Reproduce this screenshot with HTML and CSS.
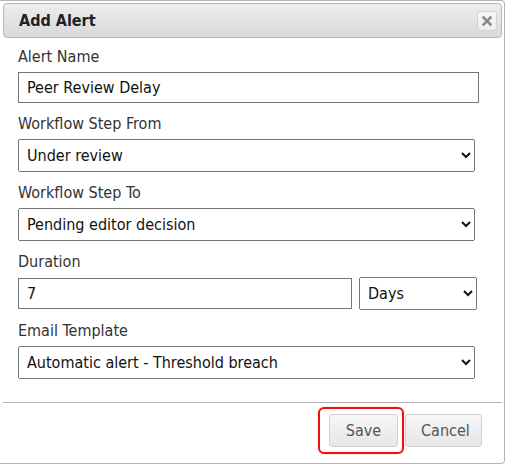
FILE: index.html
```html
<!DOCTYPE html>
<html lang="en">
<head>
<meta charset="utf-8">
<title>Add Alert</title>
<link rel="stylesheet" href="styles.css">
</head>
<body>
<div class="dialog">
  <div class="titlebar">
    <span class="title">Add Alert</span>
    <button class="close" type="button" aria-label="Close">
      <svg width="10" height="10" viewBox="0 0 10 10"><path d="M1.5 1.5 L8.5 8.5 M8.5 1.5 L1.5 8.5" stroke="#8a8a8a" stroke-width="2.6" stroke-linecap="square"/></svg>
    </button>
  </div>
  <div class="content">
    <div class="field">
      <label class="label">Alert Name</label>
      <input class="text full" type="text" value="Peer Review Delay">
    </div>
    <div class="field">
      <label class="label">Workflow Step From</label>
      <select class="sel wide"><option>Under review</option></select>
    </div>
    <div class="field">
      <label class="label">Workflow Step To</label>
      <select class="sel wide"><option>Pending editor decision</option></select>
    </div>
    <div class="field">
      <label class="label">Duration</label>
      <div class="duration-row">
        <input class="text dur" type="text" value="7">
        <select class="sel days"><option>Days</option></select>
      </div>
    </div>
    <div class="field">
      <label class="label">Email Template</label>
      <select class="sel wide"><option>Automatic alert - Threshold breach</option></select>
    </div>
  </div>
  <div class="buttonpane">
    <span class="focus-ring"><button class="btn save" type="button">Save</button></span>
    <button class="btn cancel" type="button">Cancel</button>
  </div>
</div>
</body>
</html>
```
FILE: styles.css
```css
html, body {
  margin: 0;
  padding: 0;
  background: #ffffff;
}
body {
  font-family: "DejaVu Sans Condensed", "DejaVu Sans", sans-serif;
  font-stretch: semi-condensed;
  font-size: 16px;
  color: #333333;
}
.dialog {
  box-sizing: border-box;
  width: 505px;
  height: 464px;
  border: 1px solid #b4b4b4;
  border-left: none;
  border-radius: 0 4px 4px 0;
  padding: 2px 2px 0 3px;
  display: flex;
  flex-direction: column;
}
.titlebar {
  box-sizing: border-box;
  height: 35px;
  border: 1px solid #b8b8b8;
  border-radius: 4px;
  background: linear-gradient(#ededed, #d9d9d9);
  display: flex;
  align-items: center;
  justify-content: space-between;
  padding: 0 4px 0 15px;
}
.title {
  font-weight: bold;
  color: #222222;
  font-size: 16px;
}
.close {
  box-sizing: border-box;
  width: 20px;
  height: 20px;
  margin-top: 1px;
  padding: 0;
  border: 1px solid #d3d3d3;
  border-radius: 3px;
  background: linear-gradient(#f8f8f8, #ececec);
  display: flex;
  align-items: center;
  justify-content: center;
}
.content {
  padding: 9px 0 0 15px;
}
.field {
  margin-bottom: 11px;
}
.label {
  display: block;
  line-height: 19px;
  margin-bottom: 6px;
  color: #333333;
}
.text {
  box-sizing: border-box;
  height: 31px;
  border: 1px solid #767676;
  border-radius: 0;
  padding: 0 8px;
  font: inherit;
  color: #111111;
  background: #ffffff;
  margin: 0;
}
.full {
  width: 461px;
}
.sel {
  box-sizing: border-box;
  height: 33px;
  font: inherit;
  color: #111111;
  margin: 0;
  padding-left: 4px;
}
.wide {
  width: 457px;
}
.duration-row {
  display: flex;
  align-items: center;
  gap: 7px;
}
.dur {
  width: 334px;
}
.days {
  width: 118px;
}
.buttonpane {
  margin-top: auto;
  border-top: 1px solid #b4b4b4;
  padding: 4px 20px 9px 0;
  display: flex;
  justify-content: flex-end;
  align-items: center;
  gap: 1px;
}
.focus-ring {
  display: flex;
  border: 2px solid #f01010;
  border-radius: 6px;
  padding: 5px 4px 5px 9px;
  box-shadow: 0 0 1px rgba(255, 0, 0, 0.6);
}
.btn {
  box-sizing: border-box;
  height: 33px;
  border: 1px solid #d0d0d0;
  border-radius: 3px;
  background: linear-gradient(#f6f6f6, #e7e7e7);
  color: #555555;
  font: inherit;
  padding: 0 15px;
  margin: 0;
}
.save {
  width: 69px;
}
.cancel {
  width: 77px;
}
```
